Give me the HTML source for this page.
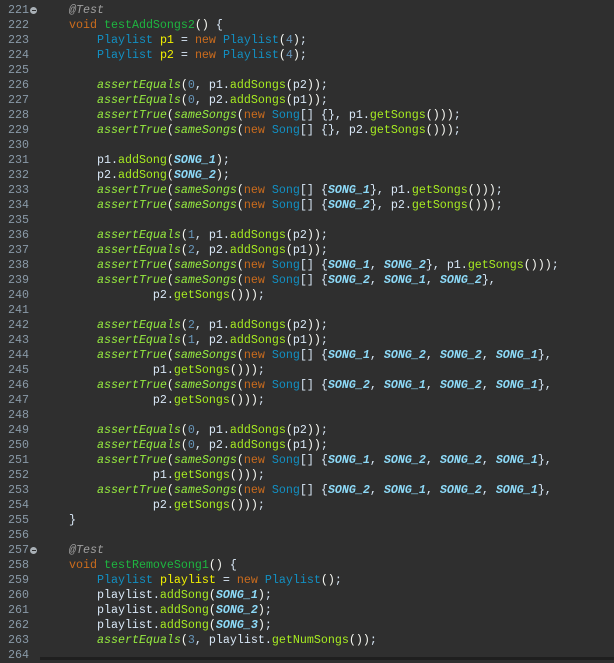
<!DOCTYPE html>
<html><head><meta charset="utf-8"><style>
body{margin:0;width:614px;height:660px;background:#2f2f2f;overflow:hidden;font-family:"Liberation Mono",monospace;font-size:11.67px;}
.ln{position:absolute;left:0;width:29px;text-align:right;color:#8a9aa8;}
.code{position:absolute;left:41px;color:#d9e8f7;}
.row{height:15px;line-height:15px;white-space:pre;}
.k{color:#cc6c1d}.t{color:#1290c3}.m{color:#1eb540}.v{color:#f2f200}
.s{color:#96ec3f;font-style:italic}.c{color:#a7ec21}.C{color:#8ddaf8;font-style:italic;font-weight:bold}
.n{color:#6897bb}.a{color:#a0a0a0;font-style:italic}.p{color:#f9faf4}
.fold{position:absolute;left:30px;width:7px;height:7px;border-radius:50%;background:#a9b0b6}
.fold:after{content:"";position:absolute;left:1.5px;top:3px;width:4px;height:1px;background:#2f2f2f}
</style></head><body>
<div class="ln" style="top:3px"><div class="row">221</div><div class="row">222</div><div class="row">223</div><div class="row">224</div><div class="row">225</div><div class="row">226</div><div class="row">227</div><div class="row">228</div><div class="row">229</div><div class="row">230</div><div class="row">231</div><div class="row">232</div><div class="row">233</div><div class="row">234</div><div class="row">235</div><div class="row">236</div><div class="row">237</div><div class="row">238</div><div class="row">239</div><div class="row">240</div><div class="row">241</div><div class="row">242</div><div class="row">243</div><div class="row">244</div><div class="row">245</div><div class="row">246</div><div class="row">247</div><div class="row">248</div><div class="row">249</div><div class="row">250</div><div class="row">251</div><div class="row">252</div><div class="row">253</div><div class="row">254</div><div class="row">255</div><div class="row">256</div><div class="row">257</div><div class="row">258</div><div class="row">259</div><div class="row">260</div><div class="row">261</div><div class="row">262</div><div class="row">263</div><div class="row">264</div></div>
<div class="fold" style="top:7px"></div>
<div class="fold" style="top:547px"></div>
<div class="code" style="top:3px">
<div class="row">    <span class="a">@Test</span></div>
<div class="row">    <span class="k">void</span> <span class="m">testAddSongs2</span><span class="p">()</span> {</div>
<div class="row">        <span class="t">Playlist</span> <span class="v">p1</span> = <span class="k">new</span> <span class="t">Playlist</span><span class="p">(</span><span class="n">4</span><span class="p">)</span>;</div>
<div class="row">        <span class="t">Playlist</span> <span class="v">p2</span> = <span class="k">new</span> <span class="t">Playlist</span><span class="p">(</span><span class="n">4</span><span class="p">)</span>;</div>
<div class="row"> </div>
<div class="row">        <span class="s">assertEquals</span><span class="p">(</span><span class="n">0</span>, p1.<span class="c">addSongs</span><span class="p">(</span>p2<span class="p">))</span>;</div>
<div class="row">        <span class="s">assertEquals</span><span class="p">(</span><span class="n">0</span>, p2.<span class="c">addSongs</span><span class="p">(</span>p1<span class="p">))</span>;</div>
<div class="row">        <span class="s">assertTrue</span><span class="p">(</span><span class="s">sameSongs</span><span class="p">(</span><span class="k">new</span> <span class="t">Song</span>[] {}, p1.<span class="c">getSongs</span><span class="p">()))</span>;</div>
<div class="row">        <span class="s">assertTrue</span><span class="p">(</span><span class="s">sameSongs</span><span class="p">(</span><span class="k">new</span> <span class="t">Song</span>[] {}, p2.<span class="c">getSongs</span><span class="p">()))</span>;</div>
<div class="row"> </div>
<div class="row">        p1.<span class="c">addSong</span><span class="p">(</span><span class="C">SONG_1</span><span class="p">)</span>;</div>
<div class="row">        p2.<span class="c">addSong</span><span class="p">(</span><span class="C">SONG_2</span><span class="p">)</span>;</div>
<div class="row">        <span class="s">assertTrue</span><span class="p">(</span><span class="s">sameSongs</span><span class="p">(</span><span class="k">new</span> <span class="t">Song</span>[] {<span class="C">SONG_1</span>}, p1.<span class="c">getSongs</span><span class="p">()))</span>;</div>
<div class="row">        <span class="s">assertTrue</span><span class="p">(</span><span class="s">sameSongs</span><span class="p">(</span><span class="k">new</span> <span class="t">Song</span>[] {<span class="C">SONG_2</span>}, p2.<span class="c">getSongs</span><span class="p">()))</span>;</div>
<div class="row"> </div>
<div class="row">        <span class="s">assertEquals</span><span class="p">(</span><span class="n">1</span>, p1.<span class="c">addSongs</span><span class="p">(</span>p2<span class="p">))</span>;</div>
<div class="row">        <span class="s">assertEquals</span><span class="p">(</span><span class="n">2</span>, p2.<span class="c">addSongs</span><span class="p">(</span>p1<span class="p">))</span>;</div>
<div class="row">        <span class="s">assertTrue</span><span class="p">(</span><span class="s">sameSongs</span><span class="p">(</span><span class="k">new</span> <span class="t">Song</span>[] {<span class="C">SONG_1</span>, <span class="C">SONG_2</span>}, p1.<span class="c">getSongs</span><span class="p">()))</span>;</div>
<div class="row">        <span class="s">assertTrue</span><span class="p">(</span><span class="s">sameSongs</span><span class="p">(</span><span class="k">new</span> <span class="t">Song</span>[] {<span class="C">SONG_2</span>, <span class="C">SONG_1</span>, <span class="C">SONG_2</span>},</div>
<div class="row">                p2.<span class="c">getSongs</span><span class="p">()))</span>;</div>
<div class="row"> </div>
<div class="row">        <span class="s">assertEquals</span><span class="p">(</span><span class="n">2</span>, p1.<span class="c">addSongs</span><span class="p">(</span>p2<span class="p">))</span>;</div>
<div class="row">        <span class="s">assertEquals</span><span class="p">(</span><span class="n">1</span>, p2.<span class="c">addSongs</span><span class="p">(</span>p1<span class="p">))</span>;</div>
<div class="row">        <span class="s">assertTrue</span><span class="p">(</span><span class="s">sameSongs</span><span class="p">(</span><span class="k">new</span> <span class="t">Song</span>[] {<span class="C">SONG_1</span>, <span class="C">SONG_2</span>, <span class="C">SONG_2</span>, <span class="C">SONG_1</span>},</div>
<div class="row">                p1.<span class="c">getSongs</span><span class="p">()))</span>;</div>
<div class="row">        <span class="s">assertTrue</span><span class="p">(</span><span class="s">sameSongs</span><span class="p">(</span><span class="k">new</span> <span class="t">Song</span>[] {<span class="C">SONG_2</span>, <span class="C">SONG_1</span>, <span class="C">SONG_2</span>, <span class="C">SONG_1</span>},</div>
<div class="row">                p2.<span class="c">getSongs</span><span class="p">()))</span>;</div>
<div class="row"> </div>
<div class="row">        <span class="s">assertEquals</span><span class="p">(</span><span class="n">0</span>, p1.<span class="c">addSongs</span><span class="p">(</span>p2<span class="p">))</span>;</div>
<div class="row">        <span class="s">assertEquals</span><span class="p">(</span><span class="n">0</span>, p2.<span class="c">addSongs</span><span class="p">(</span>p1<span class="p">))</span>;</div>
<div class="row">        <span class="s">assertTrue</span><span class="p">(</span><span class="s">sameSongs</span><span class="p">(</span><span class="k">new</span> <span class="t">Song</span>[] {<span class="C">SONG_1</span>, <span class="C">SONG_2</span>, <span class="C">SONG_2</span>, <span class="C">SONG_1</span>},</div>
<div class="row">                p1.<span class="c">getSongs</span><span class="p">()))</span>;</div>
<div class="row">        <span class="s">assertTrue</span><span class="p">(</span><span class="s">sameSongs</span><span class="p">(</span><span class="k">new</span> <span class="t">Song</span>[] {<span class="C">SONG_2</span>, <span class="C">SONG_1</span>, <span class="C">SONG_2</span>, <span class="C">SONG_1</span>},</div>
<div class="row">                p2.<span class="c">getSongs</span><span class="p">()))</span>;</div>
<div class="row">    }</div>
<div class="row"> </div>
<div class="row">    <span class="a">@Test</span></div>
<div class="row">    <span class="k">void</span> <span class="m">testRemoveSong1</span><span class="p">()</span> {</div>
<div class="row">        <span class="t">Playlist</span> <span class="v">playlist</span> = <span class="k">new</span> <span class="t">Playlist</span><span class="p">()</span>;</div>
<div class="row">        playlist.<span class="c">addSong</span><span class="p">(</span><span class="C">SONG_1</span><span class="p">)</span>;</div>
<div class="row">        playlist.<span class="c">addSong</span><span class="p">(</span><span class="C">SONG_2</span><span class="p">)</span>;</div>
<div class="row">        playlist.<span class="c">addSong</span><span class="p">(</span><span class="C">SONG_3</span><span class="p">)</span>;</div>
<div class="row">        <span class="s">assertEquals</span><span class="p">(</span><span class="n">3</span>, playlist.<span class="c">getNumSongs</span><span class="p">())</span>;</div>
<div class="row"> </div>
</div>
<div style="position:absolute;left:40px;top:657px;width:574px;height:3px;background:#1f1f1f"></div>
</body></html>
